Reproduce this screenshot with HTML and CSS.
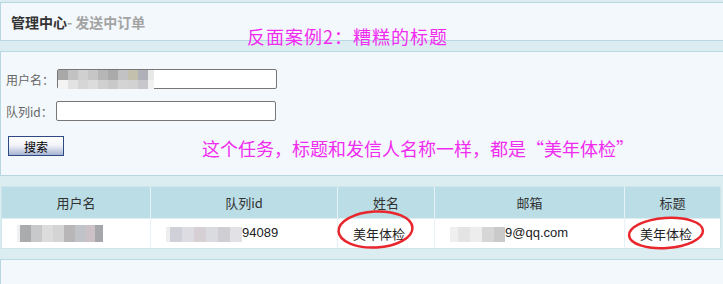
FILE: index.html
```html
<!DOCTYPE html>
<html lang="zh">
<head>
    <meta charset="UTF-8">
    <title>管理中心 - 发送中订单</title>
    <link rel="stylesheet" href="styles.css">
</head>
<body>
<div class="page">
    <div class="panel head">
        <span class="title">管理中心</span><span class="sub">- 发送中订单</span>
    </div>

    <div class="panel search">
        <div class="row">
            <span class="label">用户名：</span>
            <span class="field">
                <input type="text" class="input">
                <span class="mosaic mosaic-input"></span>
            </span>
        </div>
        <div class="row row2">
            <span class="label">队列id：</span>
            <input type="text" class="input">
        </div>
        <button class="btn">搜索</button>
    </div>

    <table class="list">
        <thead>
        <tr>
            <th class="c1">用户名</th>
            <th class="c2">队列id</th>
            <th class="c3">姓名</th>
            <th class="c4">邮箱</th>
            <th class="c5">标题</th>
        </tr>
        </thead>
        <tbody>
        <tr>
            <td><span class="mosaic mosaic-user"></span></td>
            <td><span class="mosaic mosaic-id"></span>94089</td>
            <td>美年体检</td>
            <td><span class="mosaic mosaic-mail"></span>9@qq.com</td>
            <td>美年体检</td>
        </tr>
        </tbody>
    </table>

    <div class="panel foot"></div>

    <!-- 标注 -->
    <div class="note note1">反面案例2：糟糕的标题</div>
    <div class="note note2">这个任务，标题和发信人名称一样，都是“美年体检”</div>
    <svg class="marks" width="723" height="284" viewBox="0 0 723 284">
        <ellipse cx="375.5" cy="229.5" rx="37" ry="18" transform="rotate(-3 375.5 229.5)"/>
        <ellipse cx="666" cy="233" rx="37" ry="15" transform="rotate(-4 666 233)"/>
    </svg>
</div>
</body>
</html>
```

FILE: styles.css
```css
html, body {
    margin: 0;
    padding: 0;
}
body {
    background: #dcedf1;
    font-family: "Noto Sans CJK SC", "Liberation Sans", sans-serif;
    font-size: 12px;
    color: #333;
}
.page {
    position: relative;
    height: 284px;
    overflow: hidden;
    padding-top: 2px;
    box-sizing: border-box;
}
.panel {
    background: #f3f8fc;
    border: 1px solid #b7d8e3;
    border-right: none;
}
.head {
    height: 37px;
    display: flex;
    align-items: center;
    padding-left: 10px;
}
.title {
    font-size: 14px;
    font-weight: bold;
    color: #333;
}
.sub {
    font-size: 14px;
    font-weight: bold;
    color: #a3a3a3;
}
.search {
    margin-top: 10px;
    height: 125px;
    padding: 17px 0 0 5px;
    box-sizing: border-box;
}
.row {
    display: flex;
    align-items: center;
    height: 20px;
}
.row2 {
    margin-top: 12px;
}
.label {
    color: #666;
    margin-right: 3px;
}
.field {
    position: relative;
    display: flex;
}
.input {
    width: 220px;
    height: 20px;
    box-sizing: border-box;
    border: 1px solid #777;
    border-radius: 2px;
    background: #fff;
    padding: 0 3px;
    margin: 0;
}
.btn {
    display: block;
    margin: 15px 0 0 2px;
    width: 56px;
    height: 20px;
    padding: 0;
    border: 1px solid #2e4a80;
    background: linear-gradient(#ffffff, #f2f4f9 45%, #a7b4d2);
    font-family: "Noto Sans CJK SC", sans-serif;
    font-size: 12px;
    color: #000;
}
.list {
    margin: 10px 0 0 1px;
    width: 720px;
    table-layout: fixed;
    border-collapse: separate;
    border-spacing: 0;
    border: 1px solid #cfe5ec;
    background: #fff;
}
.list th, .list td {
    box-sizing: border-box;
    border-left: 1px solid #e6f2f5;
    padding: 0;
    font-weight: normal;
}
.list th:first-child, .list td:first-child {
    border-left: none;
}
.list th {
    height: 31px;
    background: #badde6;
    color: #333;
    font-size: 13px;
    text-align: center;
}
.list td {
    height: 30px;
    border-top: 1px solid #e0eef2;
    padding-left: 15px;
    font-family: "Liberation Sans", "Noto Sans CJK SC", sans-serif;
    font-size: 13px;
    color: #222;
    white-space: nowrap;
}
.list td:nth-child(3), .list td:nth-child(5) {
    font-family: "Noto Sans CJK SC", sans-serif;
    font-size: 13px;
}
.c1 { width: 148px; }
.c2 { width: 187px; }
.c3 { width: 97px; }
.c4 { width: 190px; }
.c5 { width: 96px; }
.foot {
    margin-top: 10px;
    height: 40px;
}

/* 马赛克 */
.mosaic {
    display: inline-block;
    vertical-align: middle;
    background-repeat: no-repeat;
}
.mosaic-input {
    position: absolute;
    left: 1px;
    top: 1px;
    width: 96px;
    height: 19px;
    background-image:
        linear-gradient(90deg, #f4f4f4 0 10px, #e2e2e2 10px 20px, #d6d6d6 20px 30px, #dcdcdc 30px 40px, #d0d0d0 40px 50px, #c9c9c9 50px 60px, #d4d4d4 60px 70px, #d2d2d2 70px 80px, #c8c8cc 80px 90px, #f2f2f2 90px 96px),
        linear-gradient(90deg, #a8a8a8 0 10px, #c2c2c2 10px 20px, #d0d0d0 20px 30px, #c6c6c6 30px 40px, #b6b6b6 40px 50px, #aaaaaa 50px 60px, #c2c2c4 60px 70px, #c4c0ae 70px 80px, #b0b0b8 80px 90px, #e8e8e8 90px 96px);
    background-size: 96px 9px, 96px 10px;
    background-position: 0 10px, 0 0;
}
.mosaic-user {
    width: 86px;
    height: 17px;
    background-image:
        linear-gradient(90deg, #f0f0f0 0 3px, #a9abad 3px 14px, #c7c9cb 14px 25px, #dcdcdc 25px 36px, #d4d4d4 36px 47px, #b8b6b6 47px 58px, #c0c4c9 58px 69px, #cbc1c6 69px 78px, #a5a7aa 78px 86px);
}
.mosaic-id {
    width: 76px;
    height: 15px;
    background-image:
        linear-gradient(90deg, #eeeef0 0 4px, #cfd0d8 4px 16px, #dcdce2 16px 28px, #d6d0d4 28px 40px, #dadbe0 40px 52px, #cfcfd3 52px 64px, #e2e2e6 64px 76px);
}
.mosaic-mail {
    width: 55px;
    height: 15px;
    background-image:
        linear-gradient(90deg, #efefef 0 8px, #e4e4e4 8px 20px, #ededed 20px 32px, #d6d6d6 32px 44px, #cacaca 44px 55px);
}

/* 标注 */
.note {
    position: absolute;
    font-family: "Noto Sans CJK SC", sans-serif;
    font-size: 18px;
    line-height: 20px;
    color: #f02cf0;
    white-space: nowrap;
}
.note1 {
    left: 247px;
    top: 26px;
    letter-spacing: 1px;
}
.note2 {
    left: 202px;
    top: 138px;
}
.marks {
    position: absolute;
    left: 0;
    top: 0;
    pointer-events: none;
}
.marks ellipse {
    fill: none;
    stroke: #e8262c;
    stroke-width: 2.5;
}
```
